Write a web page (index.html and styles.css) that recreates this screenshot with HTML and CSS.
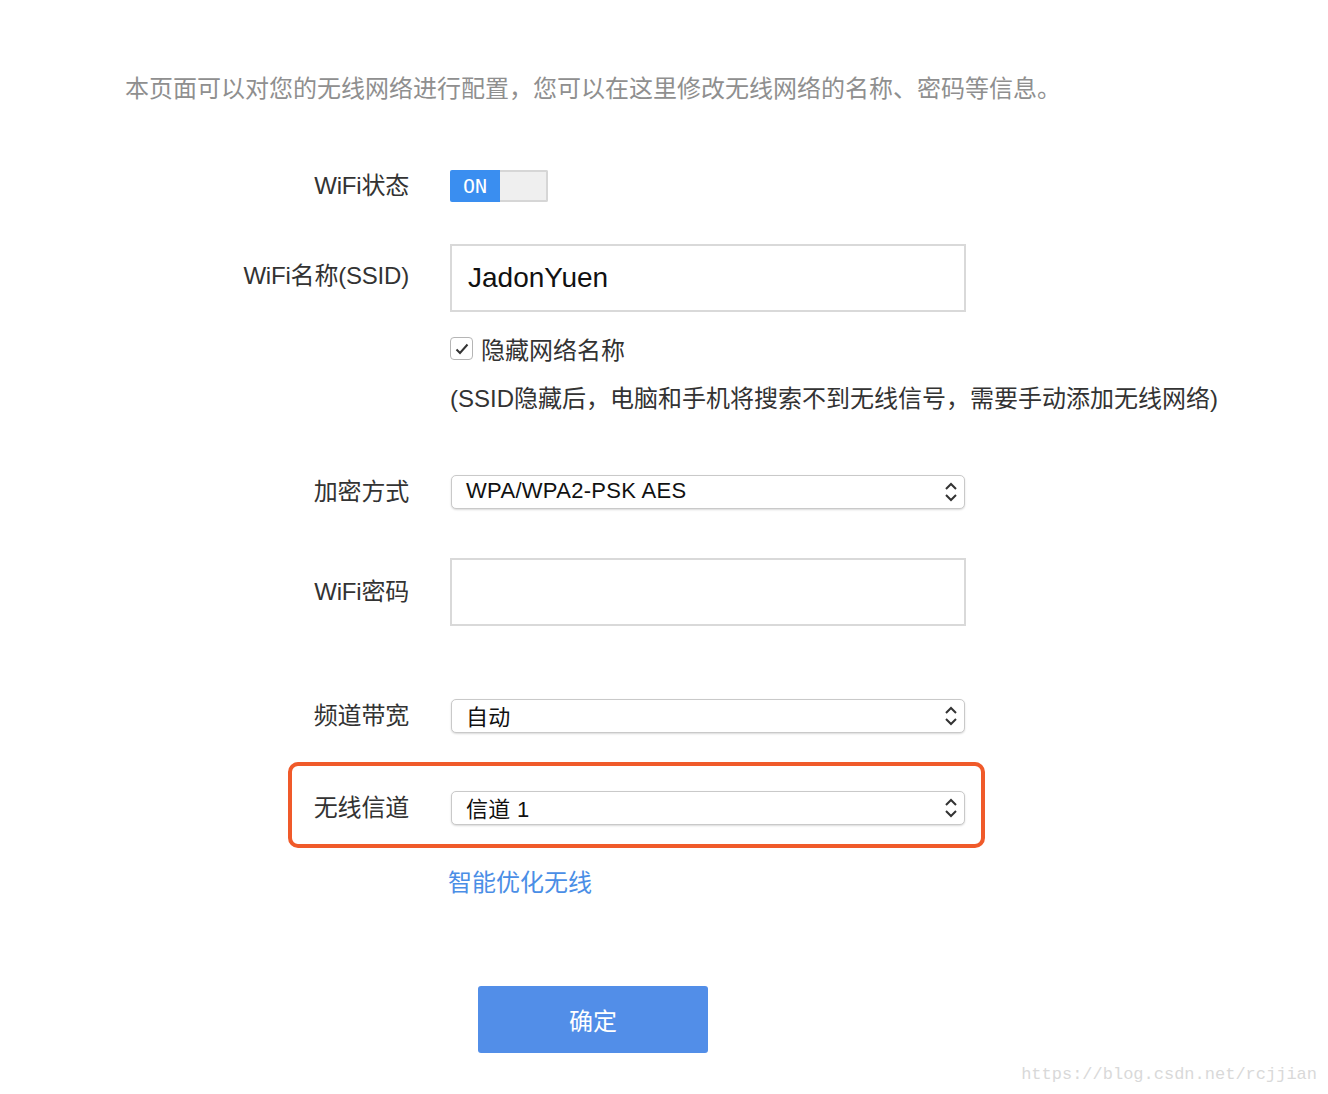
FILE: index.html
```html
<!DOCTYPE html>
<html lang="zh-CN">
<head>
  <meta charset="UTF-8">
  <title>无线设置</title>
  <link rel="stylesheet" href="styles.css">
</head>
<body>
  <p class="intro">本页面可以对您的无线网络进行配置，您可以在这里修改无线网络的名称、密码等信息。</p>

  <div class="form">
    <div class="row row-switch">
      <div class="label">WiFi状态</div>
      <div class="switch">
        <span class="switch-on">ON</span>
        <span class="switch-off"></span>
      </div>
    </div>

    <div class="row row-ssid">
      <div class="label">WiFi名称(SSID)</div>
      <div class="input">JadonYuen</div>
    </div>

    <div class="row row-check">
      <div class="field">
        <span class="checkbox">
          <svg width="14" height="12" viewBox="0 0 14 12"><path d="M1.5 6.5 L5 10 L12.5 1.5" fill="none" stroke="#333" stroke-width="2"/></svg>
        </span>
        <span>隐藏网络名称</span>
      </div>
    </div>

    <div class="row row-note">
      <div class="field note">(SSID隐藏后，电脑和手机将搜索不到无线信号，需要手动添加无线网络)</div>
    </div>

    <div class="row row-sec">
      <div class="label">加密方式</div>
      <div class="select">
        <span>WPA/WPA2-PSK AES</span>
        <svg class="arrows" width="14" height="22" viewBox="0 0 14 22"><path d="M2 8 L7 3 L12 8 M2 14 L7 19 L12 14" fill="none" stroke="#333" stroke-width="2"/></svg>
      </div>
    </div>

    <div class="row row-pass">
      <div class="label">WiFi密码</div>
      <div class="input"></div>
    </div>

    <div class="row row-band">
      <div class="label">频道带宽</div>
      <div class="select">
        <span>自动</span>
        <svg class="arrows" width="14" height="22" viewBox="0 0 14 22"><path d="M2 8 L7 3 L12 8 M2 14 L7 19 L12 14" fill="none" stroke="#333" stroke-width="2"/></svg>
      </div>
    </div>

    <div class="row row-channel highlight">
      <div class="label">无线信道</div>
      <div class="select">
        <span>信道 1</span>
        <svg class="arrows" width="14" height="22" viewBox="0 0 14 22"><path d="M2 8 L7 3 L12 8 M2 14 L7 19 L12 14" fill="none" stroke="#333" stroke-width="2"/></svg>
      </div>
    </div>

    <div class="row row-link">
      <a class="field link" href="#">智能优化无线</a>
    </div>

    <div class="row row-submit">
      <div class="field">
        <button class="btn">确定</button>
      </div>
    </div>
  </div>

  <div class="watermark">https://blog.csdn.net/rcjjian</div>
</body>
</html>
```

FILE: styles.css
```css
body {
  margin: 0;
  background: #ffffff;
  font-family: "Liberation Sans", "Noto Sans CJK SC", sans-serif;
  color: #333333;
}

.intro {
  margin: 71px 0 0 125px;
  font-size: 24px;
  line-height: 36px;
  color: #8f8f8f;
  white-space: nowrap;
}

.form {
  margin-left: 209px;
}

.row {
  display: grid;
  grid-template-columns: 200px 516px;
  column-gap: 41px;
  align-items: center;
  font-size: 24px;
}

.label {
  text-align: right;
  white-space: nowrap;
  line-height: 32px;
  letter-spacing: -0.2px;
}

.field {
  grid-column: 2;
  white-space: nowrap;
}

/* 行ごとの縦位置 */
.row-switch { margin-top: 63px; height: 32px; }
.row-ssid { margin-top: 42px; }
.row-ssid .label { margin-top: -4px; }
.row-check { margin-top: 19px; height: 30px; }
.row-note { margin-top: 20px; height: 36px; }
.row-sec { margin-top: 58px; }
.row-pass { margin-top: 49px; }
.row-band { margin-top: 73px; }
.row-channel { margin-top: 58px; }
.row-link { margin-top: 40px; height: 36px; }
.row-submit { margin-top: 85px; }

.switch {
  display: flex;
  width: 98px;
  height: 32px;
}

.switch-on {
  width: 50px;
  background: #3a8ef0;
  color: #ffffff;
  font-family: "DejaVu Sans Mono", monospace;
  font-size: 20px;
  line-height: 32px;
  text-align: center;
  border-radius: 2px 0 0 2px;
}

.switch-off {
  flex: 1;
  background: #efefef;
  border: 2px solid #d6d6d6;
  border-left: none;
  border-radius: 0 2px 2px 0;
}

.input {
  height: 68px;
  box-sizing: border-box;
  border: 2px solid #d9d9d9;
  padding: 0 16px;
  font-size: 28px;
  line-height: 64px;
  color: #111111;
}

.row-check .field {
  display: flex;
  align-items: center;
  gap: 8px;
}

.checkbox {
  display: flex;
  align-items: center;
  justify-content: center;
  width: 21px;
  height: 21px;
  border: 1px solid #b5b5b5;
  border-radius: 4px;
  background: #ffffff;
}

.note {
  line-height: 36px;
}

.select {
  display: flex;
  align-items: center;
  justify-content: space-between;
  width: 514px;
  height: 34px;
  margin-left: 1px;
  box-sizing: border-box;
  padding: 0 6px 2px 14px;
  border: 1px solid #c9c9c9;
  border-radius: 5px;
  box-shadow: 0 1px 2px rgba(0, 0, 0, 0.15);
  background: #ffffff;
  font-size: 22px;
  letter-spacing: 0.3px;
  color: #111111;
}

.select .arrows {
  margin-top: 2px;
}

.highlight {
  position: relative;
}

/* 無線信道を囲む赤枠 */
.highlight::before {
  content: "";
  position: absolute;
  left: 79px;
  top: -29px;
  width: 697px;
  height: 86px;
  box-sizing: border-box;
  border: 4px solid #f05a2a;
  border-radius: 10px;
  pointer-events: none;
}

.link {
  margin-left: -2px;
  color: #4a8ee6;
  text-decoration: none;
  line-height: 36px;
}

.btn {
  margin-left: 28px;
  width: 230px;
  height: 67px;
  border: none;
  border-radius: 3px;
  background: #528ee8;
  color: #ffffff;
  font-family: "Liberation Sans", "Noto Sans CJK SC", sans-serif;
  font-size: 24px;
  cursor: pointer;
}

.watermark {
  margin-top: 12px;
  padding-right: 11px;
  text-align: right;
  font-family: "Liberation Mono", monospace;
  font-size: 17px;
  color: #d9d9d9;
}
```
